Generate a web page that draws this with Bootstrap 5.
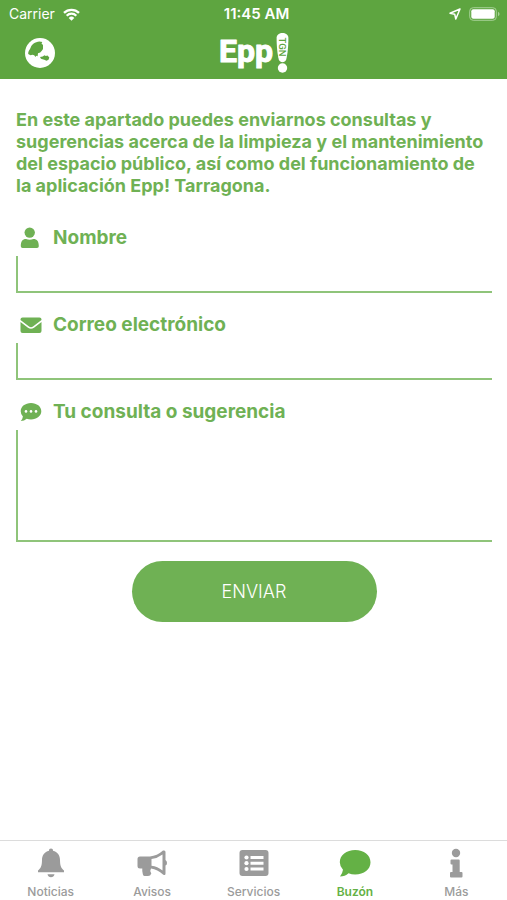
<!DOCTYPE html>
<html lang="es">
<head>
<meta charset="utf-8">
<meta name="viewport" content="width=device-width, initial-scale=1">
<title>Epp! Tarragona - Buzón</title>
<link href="https://cdn.jsdelivr.net/npm/bootstrap@5.3.0/dist/css/bootstrap.min.css" rel="stylesheet">
<style>
body { font-family: Inter, "Liberation Sans", sans-serif; color: #6fb154; background: #fff; }
svg { display: block; }
.app-head { background: #5ea540; color: #fff; }
.status { height: 28px; font-size: 14px; line-height: 28px; padding: 0 7px 0 9px; }
.status .time { font-size: 15px; font-weight: 600; }
.brand-row { height: 51px; padding: 0 24px 2px; }
.side { flex: 1 1 0; }
.app-main { padding: 30px 15px 24px 16px; }
.intro { font-size: 18px; line-height: 22px; font-weight: 700; margin-bottom: 27px; }
.field { margin-bottom: 17px; }
.field label { font-size: 19px; line-height: 28px; font-weight: 700; gap: 11px; padding-left: 4px; margin-bottom: 4px; }
.field + .field { padding-top: 1px; }
.field .line { height: 37px; color: #444; border: solid #8fc47a; border-width: 0 0 2px 2px; border-radius: 0; background: transparent; padding: 4px 8px; }
.field .area { height: 112px; resize: none; }
.send { width: 245px; height: 61px; background: #6fb154; color: #fff; font-size: 18px; font-weight: 300; margin-top: 19px; }
.send:hover { background: #5ea540; color: #fff; }
.tabs { border-top: 1px solid #dcdcdc; padding: 6px 0 0; height: 60px; }
.tabs a { color: #9b9b9b; font-size: 12px; line-height: 16px; font-weight: 500; gap: 5px; }
.tabs a.active { color: #64b145; font-weight: 600; }
</style>
<script src="https://cdn.jsdelivr.net/npm/bootstrap@5.3.0/dist/js/bootstrap.bundle.min.js"></script>
</head>
<body class="d-flex flex-column min-vh-100">
<header class="app-head">
  <div class="status d-flex align-items-center">
    <div class="side d-flex align-items-center gap-2">
      <span>Carrier</span>
      <svg width="17" height="13" viewBox="0 0 17 13" fill="none" stroke="#fff" stroke-width="2.3"><path d="M1 4.900A10.600 10.600 0 0 1 16 4.900M3.700 7.700A6.800 6.800 0 0 1 13.300 7.700"/><path d="M8.500 12.700L5.700 9.900A4 4 0 0 1 11.300 9.900Z" fill="#fff" stroke="none"/></svg>
    </div>
    <span class="time ps-1">11:45 AM</span>
    <div class="side d-flex align-items-center justify-content-end gap-2">
      <svg width="12" height="12" viewBox="0 0 12 12" fill="none" stroke="#fff" stroke-width="1.500" stroke-linejoin="round"><path d="M11 1L1 5.300L5.700 6.200L6.800 11Z"/></svg>
      <svg width="31" height="14" viewBox="0 0 31 14"><rect x=".7" y=".7" width="26.600" height="12.600" rx="3.500" fill="none" stroke="#a6d095"/><rect x="2.300" y="2.300" width="23.400" height="9.400" rx="2" fill="#fff"/><path d="M29 4.800V9.200Q30.600 8.500 30.600 7T29 4.800" fill="#a6d095"/></svg>
    </div>
  </div>
  <div class="brand-row d-flex align-items-center">
    <div class="side">
      <button type="button" class="btn p-0 border-0" aria-label="Idioma">
        <svg width="32" height="32" viewBox="0 0 32 32"><circle cx="16" cy="16" r="15" fill="#fff"/><path d="M4.200 17C4 14.500 5.500 13 6.500 11C7.500 7.500 11 5 15.500 4.600L18.300 5L17.500 6.500L19 8V12L17.800 13.700L16.200 15.500L14 16.300L13.600 19.300L12.200 18.800L11.500 20L10.200 18.300L8.500 17.800L6.500 18.200ZM16 20L18.700 19.600L20.500 18.300L21.800 19L23.500 18.600L25.300 20.500L24.500 22.800L22.500 23.800L20.300 22.800L18.500 22.300L17 21.800Z" fill="#5ea540"/></svg>
      </button>
    </div>
    <svg width="72" height="44" viewBox="0 0 72 44" role="img" aria-label="Epp! TGN">
      <text x="1" y="31" font-family="Roboto, sans-serif" font-weight="700" font-size="32" fill="#fff" stroke="#fff" stroke-width="1" stroke-linejoin="round">Epp</text>
      <path d="M58.600 7C58.600 .3 70.400 .3 70.400 7C70.400 14 69.700 23 68.200 28.500C67 32 62 32 60.800 28.500C59.300 23 58.600 14 58.600 7Z" fill="#fff"/><circle cx="64.500" cy="37" r="4.700" fill="#fff"/>
      <text transform="translate(61.300 6.500) rotate(90)" font-family="Roboto, sans-serif" font-weight="500" font-size="9.500" fill="#5ea540">TGN</text>
    </svg>
    <div class="side"></div>
  </div>
</header>

<main class="app-main flex-grow-1">
  <p class="intro">En este apartado puedes enviarnos consultas y sugerencias acerca de la limpieza y el mantenimiento del espacio público, así como del funcionamiento de la aplicación Epp! Tarragona.</p>
  <form>
    <div class="field">
      <label for="nombre" class="d-flex align-items-center">
        <svg width="22" height="22" viewBox="0 0 22 22" fill="currentColor"><circle cx="9.700" cy="5.600" r="5.200"/><path d="M.8 19.200C.8 14.500 2.500 12 6 12Q9.700 13.600 13.400 12C17 12 18.800 14.500 18.800 19.200Q18.800 21 17 21H2.600Q.8 21 .8 19.200Z"/></svg>
        Nombre
      </label>
      <input id="nombre" type="text" class="line d-block w-100">
    </div>
    <div class="field">
      <label for="correo" class="d-flex align-items-center">
        <svg width="22" height="22" viewBox="0 0 22 22" fill="currentColor"><path d="M.5 5.500Q.5 3.400 2.500 3.400H19.500Q21.500 3.400 21.500 5.500V6L13 12.500Q11 14 9 12.500L.5 6ZM.5 8L8 13.700Q11 16 14 13.700L21.500 8V17Q21.500 19 19.500 19H2.500Q.5 19 .5 17Z"/></svg>
        Correo electrónico
      </label>
      <input id="correo" type="email" class="line d-block w-100">
    </div>
    <div class="field mb-0">
      <label for="consulta" class="d-flex align-items-center">
        <svg width="22" height="22" viewBox="0 0 22 22"><path d="M11 2C16.800 2 21.300 5.600 21.300 10.200S16.800 18.400 11 18.400Q8.700 18.400 6.700 17.700Q4.300 20 .8 20Q2.700 17.800 2.900 15.500Q.7 13.200 .7 10.200C.7 5.600 5.200 2 11 2Z" fill="currentColor"/><g fill="#fff"><circle cx="6" cy="10.400" r="1.300"/><circle cx="11" cy="10.400" r="1.300"/><circle cx="16" cy="10.400" r="1.300"/></g></svg>
        Tu consulta o sugerencia
      </label>
      <textarea id="consulta" class="line area d-block w-100"></textarea>
    </div>
    <button type="button" class="btn send rounded-pill border-0 d-block mx-auto">ENVIAR</button>
  </form>
</main>

<nav class="tabs d-flex" aria-label="Principal">
  <a href="#" class="col d-flex flex-column align-items-center text-decoration-none">
    <svg width="32" height="32" viewBox="0 0 32 32" fill="currentColor"><path d="M16 1.500C17.300 1.500 18 2.400 18 3.800C22.500 4.800 25 8.500 25 13C25 19 26.400 21.500 29 23.500V25.300H3V23.500C5.600 21.500 7 19 7 13C7 8.500 9.500 4.800 14 3.800C14 2.400 14.700 1.500 16 1.500ZM12.500 27.300H19.500C19 31.300 13 31.300 12.500 27.300Z"/></svg>
    Noticias
  </a>
  <a href="#" class="col d-flex flex-column align-items-center text-decoration-none">
    <svg width="32" height="32" viewBox="0 0 32 32" fill="currentColor"><path fill-rule="evenodd" d="M4 9.500H14Q21 9 27 3.600Q29.500 2.800 29.500 5V13Q31 13.800 31 16T29.500 18.500V26.500Q29.500 29 27 27.500Q21.500 22.500 15 21.500Q13.300 24 15.300 26.500Q14.500 29 12 29H8.500Q7 29 6.800 27Q6 23.500 6.300 21.500H4Q1.500 21.500 1.500 19V12Q1.500 9.500 4 9.500ZM15.500 12V18.800Q21.500 19.500 26.500 23.500V7.500Q21.500 11.300 15.500 12Z"/></svg>
    Avisos
  </a>
  <a href="#" class="col d-flex flex-column align-items-center text-decoration-none">
    <svg width="32" height="32" viewBox="0 0 32 32"><rect x="1.500" y="3" width="29" height="26" rx="3" fill="currentColor"/><g fill="#fff"><circle cx="8.500" cy="10.500" r="2.100"/><circle cx="8.500" cy="16.200" r="2.100"/><circle cx="8.500" cy="22" r="2.100"/><path d="M12.500 9.100H25.500V12H12.500ZM12.500 14.800H25.500V17.700H12.500ZM12.500 20.500H25.500V23.400H12.500Z"/></g></svg>
    Servicios
  </a>
  <a href="#" class="active col d-flex flex-column align-items-center text-decoration-none" aria-current="page">
    <svg width="32" height="32" viewBox="0 0 32 32" fill="currentColor"><path d="M16.200 3C25 3 31.500 8 31.500 15.300S25 27.500 16.200 27.500Q12.500 27.500 9.500 26.300Q6 29.500 1 29.500Q3.500 26.500 4 22.800Q.8 19.500 .8 15.300C.8 8 7.500 3 16.200 3Z"/></svg>
    Buzón
  </a>
  <a href="#" class="col d-flex flex-column align-items-center text-decoration-none">
    <svg width="32" height="32" viewBox="0 0 32 32" fill="currentColor"><circle cx="16" cy="6" r="4.200"/><path d="M11.500 12.500H18.700Q19.700 12.500 19.700 13.500V25H21.500Q22.500 25 22.500 26V29.500Q22.500 30.500 21.500 30.500H11Q10 30.500 10 29.500V26Q10 25 11 25H12.500V17.500H11.500Q10.500 17.500 10.500 16.500V13.500Q10.500 12.500 11.500 12.500Z"/></svg>
    Más
  </a>
</nav>
</body>
</html>
